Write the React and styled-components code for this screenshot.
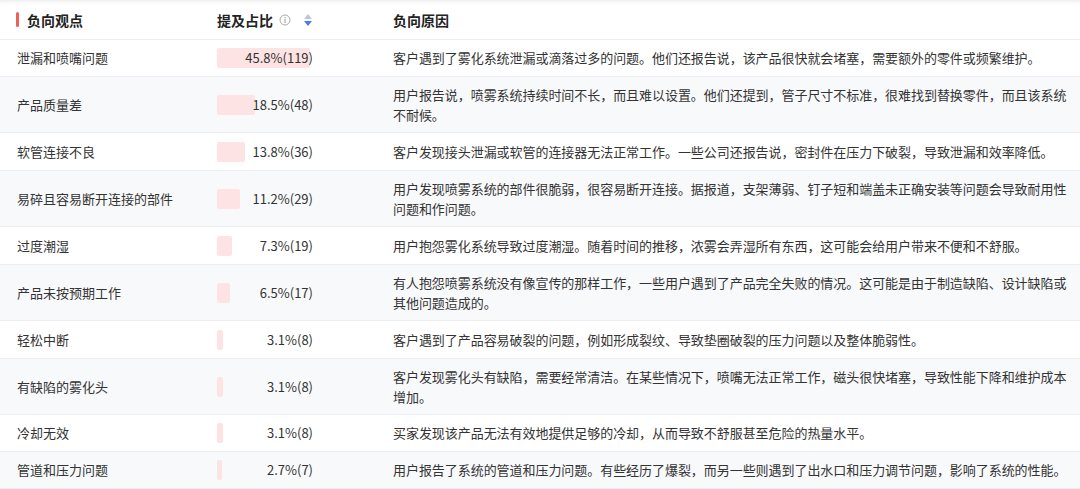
import React from "react";
import styled, { createGlobalStyle } from "styled-components";

const G = createGlobalStyle`
  body{margin:0;background:#fff;font-family:"Noto Sans CJK SC","Noto Sans",sans-serif;color:#333;}
`;
const data = [
  ["泄漏和喷嘴问题", 45.8, 119, "客户遇到了雾化系统泄漏或滴落过多的问题。他们还报告说，该产品很快就会堵塞，需要额外的零件或频繁维护。", 37],
  ["产品质量差", 18.5, 48, "用户报告说，喷雾系统持续时间不长，而且难以设置。他们还提到，管子尺寸不标准，很难找到替换零件，而且该系统不耐候。", 56],
  ["软管连接不良", 13.8, 36, "客户发现接头泄漏或软管的连接器无法正常工作。一些公司还报告说，密封件在压力下破裂，导致泄漏和效率降低。", 38],
  ["易碎且容易断开连接的部件", 11.2, 29, "用户发现喷雾系统的部件很脆弱，很容易断开连接。据报道，支架薄弱、钉子短和端盖未正确安装等问题会导致耐用性问题和作问题。", 56],
  ["过度潮湿", 7.3, 19, "用户抱怨雾化系统导致过度潮湿。随着时间的推移，浓雾会弄湿所有东西，这可能会给用户带来不便和不舒服。", 38],
  ["产品未按预期工作", 6.5, 17, "有人抱怨喷雾系统没有像宣传的那样工作，一些用户遇到了产品完全失败的情况。这可能是由于制造缺陷、设计缺陷或其他问题造成的。", 56],
  ["轻松中断", 3.1, 8, "客户遇到了产品容易破裂的问题，例如形成裂纹、导致垫圈破裂的压力问题以及整体脆弱性。", 38],
  ["有缺陷的雾化头", 3.1, 8, "客户发现雾化头有缺陷，需要经常清洁。在某些情况下，喷嘴无法正常工作，磁头很快堵塞，导致性能下降和维护成本增加。", 56],
  ["冷却无效", 3.1, 8, "买家发现该产品无法有效地提供足够的冷却，从而导致不舒服甚至危险的热量水平。", 37],
  ["管道和压力问题", 2.7, 7, "用户报告了系统的管道和压力问题。有些经历了爆裂，而另一些则遇到了出水口和压力调节问题，影响了系统的性能。", 37],
];
const Wrap = styled.div`width:1080px;`;
const Row = styled.div`
  display:grid;grid-template-columns:217px 176px 1fr;align-items:center;
  min-height:${p => p.h}px;box-sizing:border-box;border-bottom:1px solid #eceef2;
  background:${p => p.alt ? "#f8f9fb" : "#fff"};font-size:13px;line-height:20px;
`;
const Head = styled(Row)`font-weight:700;font-size:14px;color:#222;background:#fff;box-shadow:inset 0 4px 4px -3px #e8e8e8;`;
const C1 = styled.div`padding-left:17px;display:flex;align-items:center;gap:8px;`;
const Mark = styled.span`width:3px;height:15px;border-radius:2px;background:#f0605a;margin-left:-1px;`;
const Bar = styled.div`position:relative;width:96px;height:20px;display:flex;justify-content:flex-end;align-items:center;`;
const Fill = styled.div`position:absolute;left:0;top:0;height:20px;background:#fde3e3;border-radius:2px;`;
const Num = styled.span`position:relative;color:#333;`;
const C3 = styled.div`padding-right:6px;color:#333;letter-spacing:-0.05px;`;
const HC2 = styled.div`display:flex;align-items:center;gap:6px;`;
export default function App(){
  return <Wrap><G/>
    <Head h={40}>
      <C1><Mark/>负向观点</C1>
      <HC2>提及占比
        <svg width="12" height="12" viewBox="0 0 12 12"><circle cx="6" cy="6" r="5" fill="none" stroke="#aaa"/><rect x="5.4" y="5" width="1.2" height="4" fill="#aaa"/><rect x="5.4" y="3" width="1.2" height="1.2" fill="#aaa"/></svg>
        <svg width="10" height="14" viewBox="0 0 10 14" style={{marginLeft:6}}><path d="M5 1L9 6H1z" fill="#b8c6e6"/><path d="M5 13L9 8H1z" fill="#4a7cf0"/></svg>
      </HC2>
      <div>负向原因</div>
    </Head>
    {data.map((d,i)=>(
      <Row key={i} h={d[4]} alt={i%2===1}>
        <C1>{d[0]}</C1>
        <Bar><Fill style={{width:d[1]*2.03}}/><Num>{d[1]}%({d[2]})</Num></Bar>
        <C3>{d[3]}</C3>
      </Row>
    ))}
  </Wrap>;
}
